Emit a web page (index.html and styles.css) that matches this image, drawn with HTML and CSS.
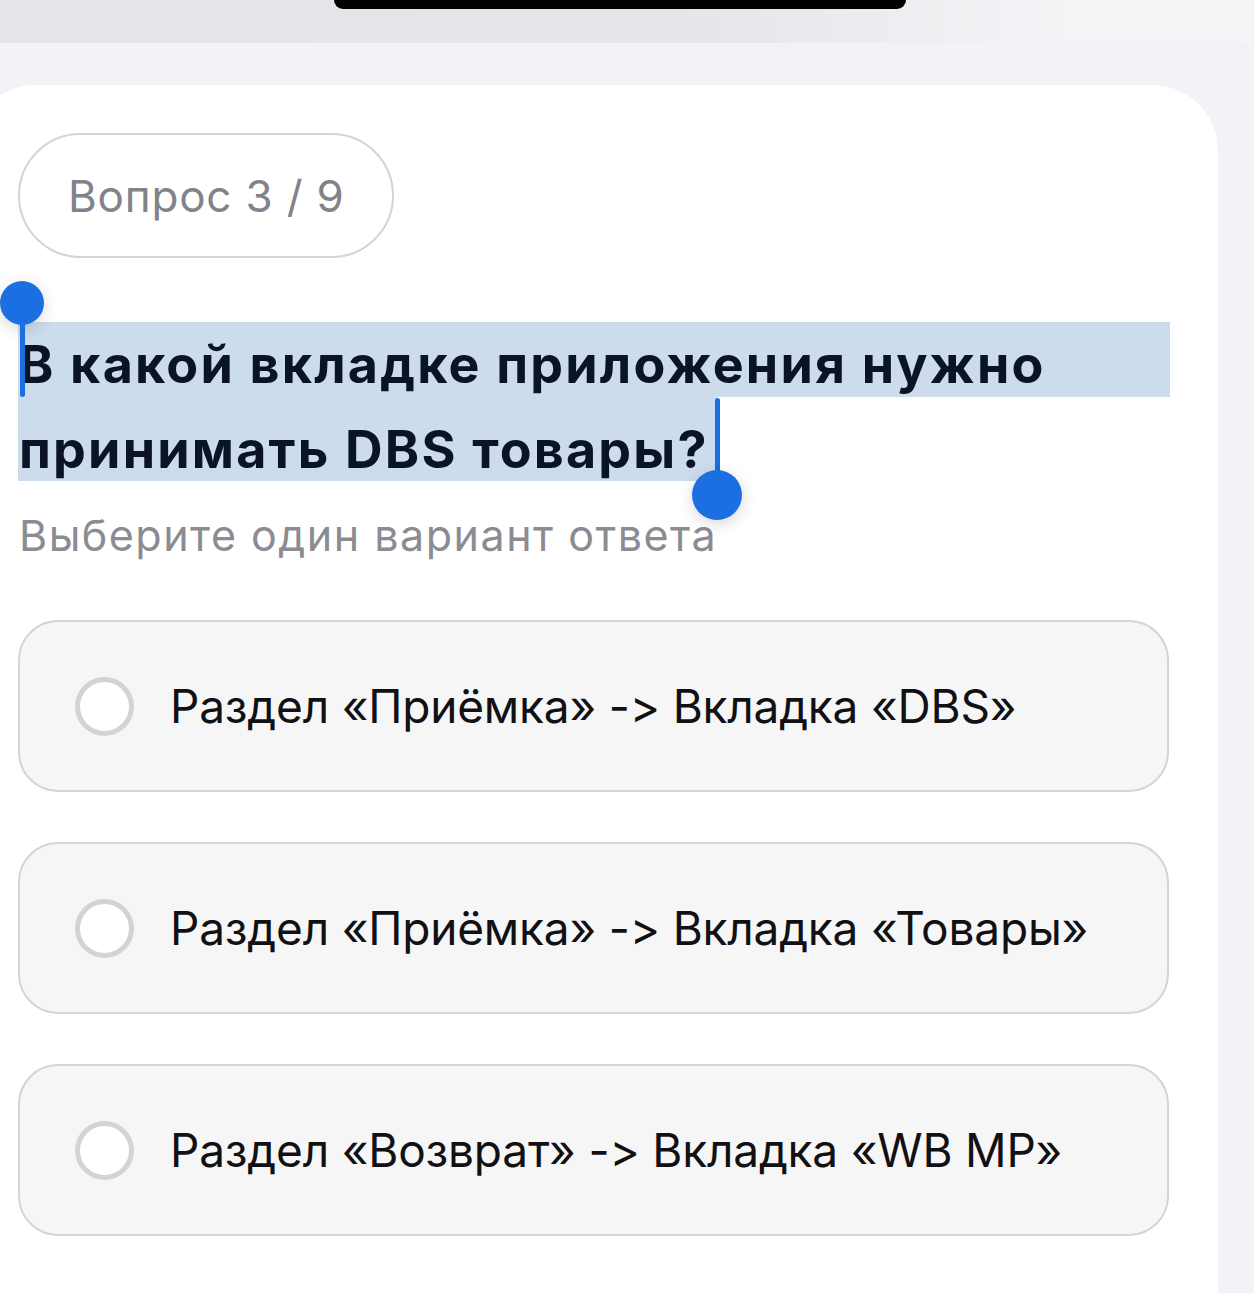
FILE: index.html
```html
<!DOCTYPE html>
<html lang="ru">
<head>
<meta charset="utf-8">
<title>Вопрос 3 / 9</title>
<link rel="stylesheet" href="styles.css">
</head>
<body>
<div class="topbar"><div class="notch"></div></div>
<main class="card">
  <div class="badge">Вопрос 3 / 9</div>
  <h1 class="question">
    <span class="line line-full">В какой вкладке приложения нужно</span>
    <span class="line line-part">принимать DBS товары?</span>
    <span class="handle handle-start"><span class="knob"></span><span class="stem"></span></span>
    <span class="handle handle-end"><span class="stem"></span><span class="knob"></span></span>
  </h1>
  <p class="hint">Выберите один вариант ответа</p>
  <div class="options">
    <label class="option"><span class="radio"></span><span class="option-text">Раздел «Приёмка» -&gt; Вкладка «DBS»</span></label>
    <label class="option"><span class="radio"></span><span class="option-text">Раздел «Приёмка» -&gt; Вкладка «Товары»</span></label>
    <label class="option"><span class="radio"></span><span class="option-text">Раздел «Возврат» -&gt; Вкладка «WB MP»</span></label>
  </div>
</main>
</body>
</html>
```
FILE: styles.css
```css
* { box-sizing: border-box; }
html, body { margin: 0; padding: 0; }
body {
  background: #f2f3f6;
  font-family: Inter, "Noto Sans", "Liberation Sans", sans-serif;
  width: 1254px;
  height: 1293px;
  overflow: hidden;
}
.topbar {
  height: 43px;
  background: linear-gradient(90deg, #e4e5e8 0%, #e5e6e9 55%, #f3f4f6 85%, #f4f5f7 100%);
  display: flex;
  justify-content: center;
  padding-right: 14px;
}
.notch {
  width: 572px;
  height: 9px;
  background: #000;
  border-radius: 0 0 26px 26px;
}
.card {
  margin: 42px 0 0 -30px;
  width: 1248px;
  height: 1208px;
  background: #fff;
  border-radius: 66px 66px 0 0;
  padding: 48px 48px 0 48px;
}
.badge {
  display: inline-flex;
  align-items: center;
  height: 125px;
  padding: 0 47px 0 48px;
  border: 2px solid #d3d3d9;
  border-radius: 63px;
  font-size: 44px;
  color: #828289;
  letter-spacing: 0.8px;
}
.question {
  position: relative;
  margin: 64px 0 0 0;
  font-size: 52px;
  font-weight: 700;
  line-height: 63px;
  color: #0a1424;
  letter-spacing: 2.2px;
}
.line {
  display: block;
  background: #cddcec;
  white-space: nowrap;
}
.line-full { height: 75px; padding: 11px 0 0 1px; }
.line-part { display: inline-block; vertical-align: top; height: 84px; padding: 21px 0 0 1px; width: 699px; }
.handle {
  position: absolute;
  display: flex;
  flex-direction: column;
  align-items: center;
}
.knob {
  border-radius: 50%;
  background: #1b6fe0;
  box-shadow: 0 4px 16px rgba(0,0,0,0.16);
  flex: none;
}
.stem { width: 5px; background: #1b6fe0; border-radius: 3px; flex: none; }
.handle-start { left: -18px; top: -41px; }
.handle-start .knob { width: 44px; height: 44px; }
.handle-start .stem { height: 76px; margin-top: -4px; }
.handle-end { left: 674px; top: 76px; }
.handle-end .knob { width: 50px; height: 50px; margin-top: -6px; }
.handle-end .stem { height: 78px; }
.hint {
  margin: 28px 0 0 1px;
  font-size: 43px;
  line-height: 52px;
  color: #8b8b92;
  letter-spacing: 1.5px;
}
.options {
  margin-top: 59px;
  width: 1151px;
  display: flex;
  flex-direction: column;
  gap: 50px;
}
.option {
  height: 172px;
  display: flex;
  align-items: center;
  gap: 36px;
  padding-left: 55px;
  background: #f6f6f7;
  border: 2px solid #d3d3d9;
  border-radius: 40px;
}
.radio {
  width: 59px;
  height: 59px;
  flex: none;
  border-radius: 50%;
  background: #fff;
  border: 5px solid #d2d2d8;
}
.option-text {
  font-size: 46px;
  color: #111114;
  letter-spacing: -0.2px;
  line-height: 56px;
}
```
